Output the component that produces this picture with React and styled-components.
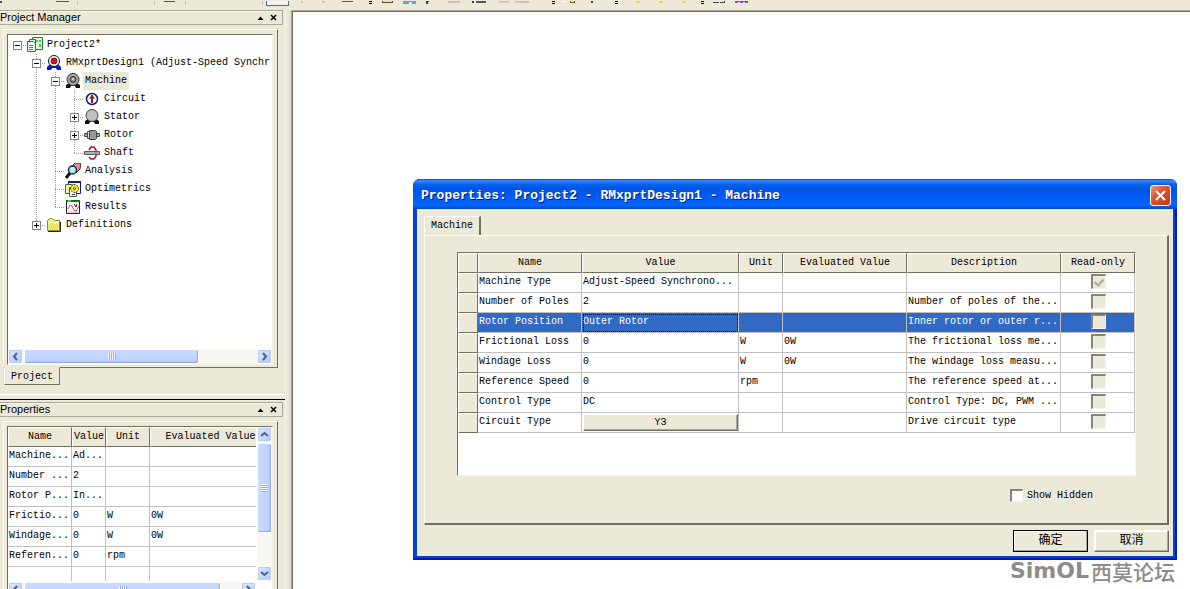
import React, { useState } from "react";
import styled, { createGlobalStyle, css } from "styled-components";

const face = "#ece9d8";
const shadow = "#716f64";
const soft = "#aca899";
const mono = '"Liberation Mono", "Noto Sans CJK SC", monospace';

const GlobalStyle = createGlobalStyle`
  * {
    box-sizing: border-box;
  }
  body {
    margin: 0;
    background: ${face};
    color: #000;
    font: 10px/18px ${mono};
  }
  button, input {
    font: inherit;
    color: inherit;
    margin: 0;
    padding: 0;
  }
`;

const raised = css`
  border: 1px solid;
  border-color: #fff ${shadow} ${shadow} #fff;
`;

const sunken = css`
  border: 1px solid;
  border-color: ${shadow} #f6f4ec #f6f4ec ${shadow};
`;

/* ---------- shell ---------- */

const Shell = styled.div`
  display: flex;
  flex-direction: column;
  height: 100vh;
  overflow: hidden;
`;

const Toolbar = styled.div`
  flex: none;
  height: 10px;
  overflow: hidden;
`;

const Body = styled.div`
  flex: 1;
  display: flex;
  min-height: 0;
`;

const Sidebar = styled.aside`
  flex: none;
  width: 285px;
  overflow: hidden;
`;

const Gutter = styled.div`
  flex: none;
  width: 6px;
  border-right: 2px solid #e0dccb;
  border-left: 1px solid #f6f4ec;
`;

const Workspace = styled.main`
  flex: 1;
  position: relative;
  min-width: 0;
  background: #fff;
  border: solid ${soft};
  border-width: 1px 0 0 1px;
  box-shadow: inset 1px 1px ${shadow};
`;

/* ---------- docked panels ---------- */

const Caption = styled.header`
  display: flex;
  align-items: center;
  width: 283px;
  height: 15px;
  padding-right: 2px;
  border: 1px solid ${soft};
  border-left: 0;
  box-shadow: inset 0 1px #f6f4ec;
`;

const CaptionTitle = styled.h2`
  flex: 1;
  margin: 0;
  font: 11px/13px "Liberation Sans", sans-serif;
`;

const CaptionButton = styled.button`
  display: flex;
  justify-content: center;
  align-items: center;
  width: 13px;
  height: 13px;
  border: 0;
  background: none;
`;

const Frame = styled.div`
  ${raised}
  margin: 4px 7px 0 3px;
  padding: 4px 4px 2px 3px;
`;

const Well = styled.div`
  ${sunken}
  height: ${(p) => p.$height}px;
  display: grid;
  grid-template: ${(p) =>
    p.$vertical ? "minmax(0, 1fr) 15px / minmax(0, 1fr) 15px" : "minmax(0, 1fr) 15px / minmax(0, 1fr)"};
  gap: 1px;
  background: #fff;
`;

const SheetTab = styled.button`
  display: block;
  width: 56px;
  height: 18px;
  margin: -1px 0 0 4px;
  border: 1px solid;
  border-color: ${face} ${shadow} ${shadow} #fff;
  background: ${face};
  text-align: center;
`;

const Splitter = styled.div`
  height: 6px;
  margin: 9px 0 2px;
  border-top: 1px solid #fff;
  border-bottom: 1px solid #000;
`;

/* ---------- scroll bars ---------- */

const ScrollTrack = styled.div`
  display: flex;
  flex-direction: ${(p) => (p.$vertical ? "column" : "row")};
  gap: 1px;
  background: #f7f6f1;
`;

const ScrollArrow = styled.button`
  flex: none;
  display: flex;
  align-items: center;
  justify-content: center;
  width: 15px;
  height: 15px;
  border: 1px solid #fff;
  border-radius: 2px;
  background: linear-gradient(135deg, #dbe6ff, #b3c8f8);
  box-shadow: inset 0 0 0 1px #b9cbf5;
`;

const ScrollThumb = styled.div`
  display: flex;
  align-items: center;
  justify-content: center;
  ${(p) => (p.$vertical ? "height" : "width")}: ${(p) => p.$length}px;
  margin-${(p) => (p.$vertical ? "bottom" : "right")}: auto;
  border: 1px solid #fff;
  border-radius: 2px;
  box-shadow: inset -1px -1px #8fabe4;
  background: linear-gradient(${(p) => (p.$vertical ? "90deg" : "180deg")}, #cbdafe, #c3d4fd 60%, #b3c8f9);
`;

const Grip = styled.span`
  ${(p) => (p.$vertical ? "width: 7px; height: 8px;" : "width: 8px; height: 7px;")}
  background: repeating-linear-gradient(
    ${(p) => (p.$vertical ? "180deg" : "90deg")},
    #f4f8ff 0 1px,
    #94b0ee 1px 2px
  );
`;

const arrows = {
  left: "M6 1 3 4.500 6 8",
  right: "M3 1 6 4.500 3 8",
  up: "M1 6 4.500 3 8 6",
  down: "M1 3 4.500 6 8 3",
};

const Arrow = ({ dir }) => (
  <ScrollArrow type="button" aria-label={`Scroll ${dir}`}>
    <svg width="9" height="9" viewBox="0 0 9 9">
      <path d={arrows[dir]} fill="none" stroke="#4d6185" strokeWidth="2" />
    </svg>
  </ScrollArrow>
);

const ScrollBar = ({ vertical, length }) => (
  <ScrollTrack $vertical={vertical}>
    <Arrow dir={vertical ? "up" : "left"} />
    <ScrollThumb $vertical={vertical} $length={length}>
      <Grip $vertical={vertical} />
    </ScrollThumb>
    <Arrow dir={vertical ? "down" : "right"} />
  </ScrollTrack>
);

/* ---------- project tree ---------- */

const TreeList = styled.ul`
  margin: 0;
  padding: 1px 0 0;
  overflow: hidden;
  list-style: none;
`;

const TreeRow = styled.li`
  display: flex;
  height: 18px;
  white-space: pre;
`;

const dots = (dir) => `repeating-linear-gradient(${dir}, #a0a0a0 0 1px, transparent 1px 2px)`;

const Guide = styled.span`
  flex: none;
  display: flex;
  align-items: center;
  justify-content: center;
  width: 19px;
  background-repeat: no-repeat;
  background-image: ${dots("180deg")}, ${dots("90deg")};
  background-position: 9px 0, 9px 9px;
  background-size: ${(p) =>
    ({
      line: "1px 100%, 0 0",
      tee: "1px 100%, 10px 1px",
      end: "1px 50%, 10px 1px",
      root: "0 0, 10px 1px",
      none: "0 0, 0 0",
    }[p.$kind])};
`;

const Expander = styled.button`
  display: flex;
  width: 9px;
  height: 9px;
  border: 1px solid #848284;
  background: #fff;
`;

const TreeIcon = styled.span`
  flex: none;
  display: flex;
  align-items: center;
  width: 18px;
`;

const TreeLabel = styled.span`
  padding: 0 2px;
  background: ${(p) => (p.$selected ? face : "none")};
`;

const icons = {
  project: (
    <>
      <path d="M5.500 0.500h10v12h-10z" fill="#dff8df" stroke="#0a8a20" />
      <path d="M9 3h2v2h-2zM12 3h2v2h-2zM12 7h2v3h-2z" fill="#48c858" />
      <path d="M2.500 2.500h6v11h-6z" fill="#fff" stroke="#0a8a20" />
      <path d="M0.500 4.500h6l2 2v8h-8z" fill="#eaffea" stroke="#0a8a20" />
      <path d="M2 8.500h4M2 10.500h4M2 12.500h4" stroke="#20a838" />
    </>
  ),
  design: (
    <>
      <path d="M1 15v-3l3-3h8l3 3v3h-4l-1-2H6l-1 2z" fill="#0018d8" />
      <circle cx="8" cy="6" r="5.500" fill="#fff" stroke="#111" />
      <circle cx="8" cy="6" r="3" fill="#e01020" stroke="#701018" />
    </>
  ),
  machine: (
    <>
      <path d="M1 15v-3l3-2h8l3 2v3h-4l-1-2H6l-1 2z" fill="#111" />
      <circle cx="8" cy="6.500" r="6" fill="#a8a8a8" stroke="#333" />
      <circle cx="8" cy="6.500" r="3" fill="#888" stroke="#333" />
      <path d="M7 5h2v2H7z" fill="#ccc" />
    </>
  ),
  circuit: (
    <>
      <circle cx="8" cy="8" r="5.500" fill="#fff" stroke="#181878" strokeWidth="1.500" />
      <path d="M8 4v8" stroke="#a01020" strokeWidth="2" />
      <path d="M5 7.500 8 4l3 3.500z" fill="#a01020" />
    </>
  ),
  stator: (
    <>
      <path d="M1 15v-3l3-2h8l3 2v3h-4l-1-2H6l-1 2z" fill="#111" />
      <circle cx="8" cy="6.500" r="6" fill="#c0c0c0" stroke="#444" />
    </>
  ),
  rotor: (
    <>
      <path d="M0.500 6.500h3v3h-3zM12.500 6.500h3v3h-3z" fill="#aaa" stroke="#444" />
      <path d="M3.500 4.500h2v7h-2z" fill="#ddd" stroke="#444" />
      <path d="M5.500 3.500h6l1 1v7l-1 1h-6z" fill="#999" stroke="#444" />
    </>
  ),
  shaft: (
    <>
      <path d="M5 5l2-3h3l2 3v6l-2 3H7l-2-2" fill="none" stroke="#a01830" strokeWidth="1.500" />
      <path d="M0.500 6.500h15v3h-15z" fill="#b0b0b0" stroke="#555" />
      <path d="M12 5v5" stroke="#c05060" />
    </>
  ),
  analysis: (
    <>
      <path d="M7 3l3-3h6l-1 6-4 4z" fill="#e09098" stroke="#602028" />
      <path d="M1 15l4-5" stroke="#111" strokeWidth="3" />
      <circle cx="7.500" cy="7" r="4" fill="#a8e8f4" stroke="#183048" strokeWidth="1.500" />
      <path d="M6 6l2-1M7 9l2-3" stroke="#fff" />
    </>
  ),
  optimetrics: (
    <>
      <path d="M3.500 0.500h12v12h-12z" fill="#fff" stroke="#1018a0" />
      <path d="M3 0h13v2H3z" fill="#1018a0" />
      <path d="M0.500 3.500h7v9h-7z" fill="#f4f0a0" stroke="#666020" />
      <path d="M4.500 6.500h7v9h-7z" fill="#fff" stroke="#555" />
      <path d="M9.500 3v9M5 7.500h9M6.500 4.500l6 6M12.500 4.500l-6 6" stroke="#555010" strokeWidth="2" />
      <circle cx="9.500" cy="7.500" r="3.500" fill="#f4e818" />
      <circle cx="9.500" cy="7.500" r="1" fill="#fff" stroke="#333" />
      <path d="M7 13.500h3" stroke="#2030c0" />
    </>
  ),
  results: (
    <>
      <path d="M1.500 1.500h13v13h-13z" fill="#fff" stroke="#222" />
      <path d="M1 1h14v2H1z" fill="#107818" />
      <path d="M3 1h3v2H3z" fill="#50d050" />
      <path d="M3 10l2-4 2 1 2 4 2 1 3-5" fill="none" stroke="#d84060" />
      <path d="M9 5l2 3 1-3" fill="none" stroke="#222" />
      <path d="M3 13h10" stroke="#e8a0b0" />
    </>
  ),
  folder: (
    <>
      <path d="M1.500 13.500v-10l2-2h3l2 2h5v10z" fill="#f0ec78" stroke="#908c30" />
      <path d="M2 5.500h11" stroke="#fffcc8" />
      <path d="M2 14.500h12.500V5" fill="none" stroke="#222" />
      <path d="M4 8h8M3 10h9M4 12h8" stroke="#d8cc40" strokeDasharray="1 1" />
    </>
  ),
};

const tree = [
  { guides: ["root"], mark: "-", icon: "project", label: "Project2*" },
  { guides: ["none", "tee"], mark: "-", icon: "design", label: "RMxprtDesign1 (Adjust-Speed Synchr" },
  { guides: ["none", "line", "tee"], mark: "-", icon: "machine", label: "Machine", selected: true },
  { guides: ["none", "line", "line", "tee"], icon: "circuit", label: "Circuit" },
  { guides: ["none", "line", "line", "tee"], mark: "+", icon: "stator", label: "Stator" },
  { guides: ["none", "line", "line", "tee"], mark: "+", icon: "rotor", label: "Rotor" },
  { guides: ["none", "line", "line", "end"], icon: "shaft", label: "Shaft" },
  { guides: ["none", "line", "tee"], icon: "analysis", label: "Analysis" },
  { guides: ["none", "line", "tee"], icon: "optimetrics", label: "Optimetrics" },
  { guides: ["none", "line", "end"], icon: "results", label: "Results" },
  { guides: ["none", "end"], mark: "+", icon: "folder", label: "Definitions" },
];

const Tree = () => (
  <TreeList>
    {tree.map((node) => (
      <TreeRow key={node.label}>
        {node.guides.map((kind, i) => (
          <Guide key={i} $kind={kind}>
            {node.mark && i === node.guides.length - 1 && (
              <Expander type="button" aria-label={`Toggle ${node.label}`}>
                <svg width="7" height="7" viewBox="0 0 7 7">
                  <path d={node.mark === "+" ? "M1 3.500h5M3.500 1v5" : "M1 3.500h5"} stroke="#000" />
                </svg>
              </Expander>
            )}
          </Guide>
        ))}
        <TreeIcon>
          <svg width="16" height="16" viewBox="0 0 16 16">
            {icons[node.icon]}
          </svg>
        </TreeIcon>
        <TreeLabel $selected={node.selected}>{node.label}</TreeLabel>
      </TreeRow>
    ))}
  </TreeList>
);

/* ---------- property grids ---------- */

const GridClip = styled.div`
  overflow: hidden;
`;

const Grid = styled.table`
  width: ${(p) => p.$width};
  table-layout: fixed;
  border-collapse: separate;
  border-spacing: 0;
  white-space: pre;
`;

const HeadCell = styled.th`
  ${raised}
  height: 20px;
  padding: 0;
  background: ${face};
  font-weight: normal;
  line-height: 18px;
  overflow: hidden;
`;

const RowHead = styled.th`
  ${raised}
  padding: 0;
  background: ${face};
`;

const Cell = styled.td`
  height: 20px;
  padding: 0 0 1px 1px;
  border: solid #c0c0c0;
  border-width: 0 1px 1px 0;
  line-height: 18px;
  text-align: ${(p) => (p.$center ? "center" : "left")};
  ${(p) => p.$focused && "outline: 1px dotted #000; outline-offset: -2px;"}
`;

const Row = styled.tr`
  ${(p) => p.$selected && "background: #316ac5; color: #fff;"}
`;

const CellButton = styled.button`
  ${raised}
  display: block;
  width: 100%;
  height: 17px;
  background: ${face};
  box-shadow: inset -1px -1px ${soft};
  line-height: 13px;
`;

const CheckBox = styled.input`
  appearance: none;
  display: inline-flex;
  align-items: center;
  justify-content: center;
  width: ${(p) => (p.$small ? 13 : 15)}px;
  height: ${(p) => (p.$small ? 13 : 15)}px;
  border: solid;
  border-width: 2px 1px 1px 2px;
  border-color: #85837a #f6f4ec #f6f4ec #85837a;
  background: ${(p) => (p.$small ? "#fff" : face)};
  vertical-align: middle;
  &:checked::after {
    content: "";
    width: 4px;
    height: 7px;
    border: solid ${soft};
    border-width: 0 2px 2px 0;
    transform: rotate(42deg);
  }
`;

const dockRows = [
  ["Machine...", "Ad...", "", ""],
  ["Number ...", "2", "", ""],
  ["Rotor P...", "In...", "", ""],
  ["Frictio...", "0", "W", "0W"],
  ["Windage...", "0", "W", "0W"],
  ["Referen...", "0", "rpm", ""],
  ["", "", "", ""],
];

const DockGrid = () => (
  <Grid $width="263px">
    <colgroup>
      <col width="64" />
      <col width="34" />
      <col width="44" />
      <col />
    </colgroup>
    <thead>
      <tr>
        {["Name", "Value", "Unit", "Evaluated Value"].map((h) => (
          <HeadCell key={h}>{h}</HeadCell>
        ))}
      </tr>
    </thead>
    <tbody>
      {dockRows.map((row, i) => (
        <Row key={i}>
          {row.map((text, j) => (
            <Cell key={j}>{text}</Cell>
          ))}
        </Row>
      ))}
    </tbody>
  </Grid>
);

const rows = [
  { name: "Machine Type", value: "Adjust-Speed Synchrono...", readOnly: true },
  { name: "Number of Poles", value: "2", text: "Number of poles of the..." },
  { name: "Rotor Position", value: "Outer Rotor", text: "Inner rotor or outer r...", selected: true },
  { name: "Frictional Loss", value: "0", unit: "W", evaluated: "0W", text: "The frictional loss me..." },
  { name: "Windage Loss", value: "0", unit: "W", evaluated: "0W", text: "The windage loss measu..." },
  { name: "Reference Speed", value: "0", unit: "rpm", text: "The reference speed at..." },
  { name: "Control Type", value: "DC", text: "Control Type: DC, PWM ..." },
  { name: "Circuit Type", button: "Y3", text: "Drive circuit type" },
];

const MachineGrid = () => (
  <Grid $width="100%">
    <colgroup>
      <col width="20" />
      <col width="104" />
      <col width="157" />
      <col width="44" />
      <col width="124" />
      <col width="154" />
      <col />
    </colgroup>
    <thead>
      <tr>
        {["", "Name", "Value", "Unit", "Evaluated Value", "Description", "Read-only"].map((h) => (
          <HeadCell key={h}>{h}</HeadCell>
        ))}
      </tr>
    </thead>
    <tbody>
      {rows.map((row) => (
        <Row key={row.name} $selected={row.selected}>
          <RowHead />
          <Cell>{row.name}</Cell>
          <Cell $focused={row.selected}>
            {row.button ? <CellButton type="button">{row.button}</CellButton> : row.value}
          </Cell>
          <Cell>{row.unit}</Cell>
          <Cell>{row.evaluated}</Cell>
          <Cell>{row.text}</Cell>
          <Cell $center>
            <CheckBox
              type="checkbox"
              aria-label={`${row.name} read-only`}
              defaultChecked={row.readOnly}
              disabled
            />
          </Cell>
        </Row>
      ))}
    </tbody>
  </Grid>
);

/* ---------- dialog ---------- */

const Dialog = styled.section`
  position: absolute;
  top: 168px;
  left: 121px;
  right: 13px;
  padding: 0 4px 4px;
  border-radius: 7px 7px 0 0;
  background: #0842d8;
  box-shadow: inset 1px 0 #0a2fc0, inset -2px -2px #0019b0;
`;

const TitleBar = styled.header`
  display: flex;
  align-items: center;
  height: 30px;
  margin: 0 -4px;
  padding: 3px 6px 0 8px;
  border-radius: 7px 7px 0 0;
  background: linear-gradient(
    #0a50d0,
    #3a8cff 2px,
    #0a62ee 5px,
    #0054e3 10px,
    #0060fa 22px,
    #0066ff 26px,
    #0048c8
  );
`;

const Title = styled.h1`
  flex: 1;
  margin: 0;
  color: #fff;
  font: bold 13px/20px ${mono};
  text-shadow: 1px 1px #0a1883;
`;

const CloseButton = styled.button`
  display: flex;
  align-items: center;
  justify-content: center;
  width: 21px;
  height: 21px;
  border: 1px solid #fff;
  border-radius: 3px;
  background: linear-gradient(135deg, #f0967c, #e0532f 40%, #c43a12);
`;

const DialogBody = styled.div`
  padding: 7px 4px 4px 7px;
  background: ${face};
`;

const PageTab = styled.button`
  display: block;
  width: 57px;
  height: 19px;
  border: solid;
  border-width: 1px 2px 0 1px;
  border-color: #fff ${shadow} ${face} #fff;
  background: ${face};
  line-height: 16px;
`;

const Page = styled.div`
  padding: 16px 31px 21px 32px;
  border: solid;
  border-width: 1px 2px 2px 1px;
  border-color: #fff ${shadow} ${shadow} #fff;
`;

const GridWell = styled.div`
  ${sunken}
  height: 224px;
  background: #fff;
`;

const Option = styled.label`
  display: flex;
  align-items: center;
  justify-content: flex-end;
  gap: 4px;
  height: 13px;
  margin-top: 13px;
  padding-right: 43px;
`;

const Actions = styled.footer`
  display: flex;
  justify-content: flex-end;
  gap: 6px;
  margin-top: 5px;
`;

const ActionButton = styled.button`
  width: 75px;
  height: 22px;
  border: 1px solid;
  border-color: ${(p) => (p.$primary ? "#000" : `#fff ${shadow} ${shadow} #fff`)};
  box-shadow: inset -1px -1px ${soft}, inset 1px 1px #fff;
  background: ${face};
  font: 12px/18px ${mono};
`;

const Watermark = styled.div`
  position: absolute;
  right: 15px;
  bottom: 8px;
  display: flex;
  align-items: center;
  gap: 2px;
  color: #8f8b8b;
  font: 500 21px/20px "Noto Sans CJK SC", sans-serif;
`;

const Brand = styled.span`
  font: bold 22px/20px "DejaVu Sans", sans-serif;
`;

const ToolbarArt = () => (
  <svg width="760" height="10" viewBox="0 0 760 10" shapeRendering="crispEdges" aria-hidden="true">
    <path d="M77.500 0v4M154.500 0v4M185.500 0v4M262.500 0v4" stroke="#c5c2b0" />
    <path d="M0 1h2M56 0h13M164 0h11M342 0h11M476 1h10" stroke="#555" strokeWidth="2" />
    <path d="M266.500 0v4.500h22V0" fill="#f4f3ee" stroke="#4a6cb8" />
    <path d="M301 1h2M322 1h3M448 1h12M499 1h10M515 1h14" stroke="#c8c5b8" strokeWidth="2" />
    <path d="M370.500 0v3M553.500 0v3M616.500 0v3M702.500 0v3" stroke="#000" strokeWidth="3" strokeDasharray="1 1" />
    <path d="M382.500 0v1.500h10V0" fill="#e8ec60" stroke="#55551c" />
    <path d="M403 0h13v3h-4V1h-3v2h-6z" fill="#58a8e8" />
    <path d="M426 0h3v1h-1v2h-2zM472 0h2v2h-2zM591 0h2v2h-2z" fill="#444" />
    <path d="M562 0h6v1h-6z" fill="#fff" />
    <path d="M570.500 0v1.500h4V0" fill="#e8ec60" stroke="#66661c" />
    <path d="M636 0h4v2h-4zM659 0h4v2h-4zM682 0h4v2h-4z" fill="#dce048" />
    <path d="M713 1.500h6M720 1.500h4V0" fill="none" stroke="#444" />
    <path d="M735 0h13v2h-3V1h-2v1h-3V1h-2v1h-3z" fill="#8048e0" />
  </svg>
);

const PanelCaption = ({ title }) => (
  <Caption>
    <CaptionTitle>{title}</CaptionTitle>
    <CaptionButton type="button" aria-label={`Collapse ${title}`}>
      <svg width="7" height="4" viewBox="0 0 7 4">
        <path d="M0.500 4 3.500 0.500 6.500 4z" />
      </svg>
    </CaptionButton>
    <CaptionButton type="button" aria-label={`Close ${title}`}>
      <svg width="7" height="7" viewBox="0 0 7 7">
        <path d="M1 1l5 5M6 1l-5 5" stroke="#000" strokeWidth="1.500" />
      </svg>
    </CaptionButton>
  </Caption>
);

const App = () => {
  const [showHidden, setShowHidden] = useState(false);

  return (
    <Shell>
      <GlobalStyle />
      <Toolbar>
        <ToolbarArt />
      </Toolbar>
      <Body>
        <Sidebar>
          <PanelCaption title="Project Manager" />
          <Frame>
            <Well $height={331}>
              <Tree />
              <ScrollBar length={175} />
            </Well>
          </Frame>
          <SheetTab type="button">Project</SheetTab>
          <Splitter />
          <PanelCaption title="Properties" />
          <Frame>
            <Well $height={172} $vertical>
              <GridClip>
                <DockGrid />
              </GridClip>
              <ScrollBar vertical length={90} />
              <ScrollBar length={197} />
            </Well>
          </Frame>
        </Sidebar>
        <Gutter />
        <Workspace>
          <Dialog role="dialog" aria-labelledby="dialog-title">
            <TitleBar>
              <Title id="dialog-title">Properties: Project2 - RMxprtDesign1 - Machine</Title>
              <CloseButton type="button" aria-label="Close">
                <svg width="13" height="13" viewBox="0 0 13 13">
                  <path d="M2 2l9 9M11 2l-9 9" stroke="#fff" strokeWidth="2" />
                </svg>
              </CloseButton>
            </TitleBar>
            <DialogBody>
              <PageTab type="button">Machine</PageTab>
              <Page>
                <GridWell>
                  <MachineGrid />
                </GridWell>
                <Option>
                  <CheckBox
                    type="checkbox"
                    $small
                    checked={showHidden}
                    onChange={(e) => setShowHidden(e.target.checked)}
                  />
                  Show Hidden
                </Option>
              </Page>
              <Actions>
                <ActionButton type="button" $primary>确定</ActionButton>
                <ActionButton type="button">取消</ActionButton>
              </Actions>
            </DialogBody>
          </Dialog>
          <Watermark>
            <Brand>SimOL</Brand>西莫论坛
          </Watermark>
        </Workspace>
      </Body>
    </Shell>
  );
};

export default App;
